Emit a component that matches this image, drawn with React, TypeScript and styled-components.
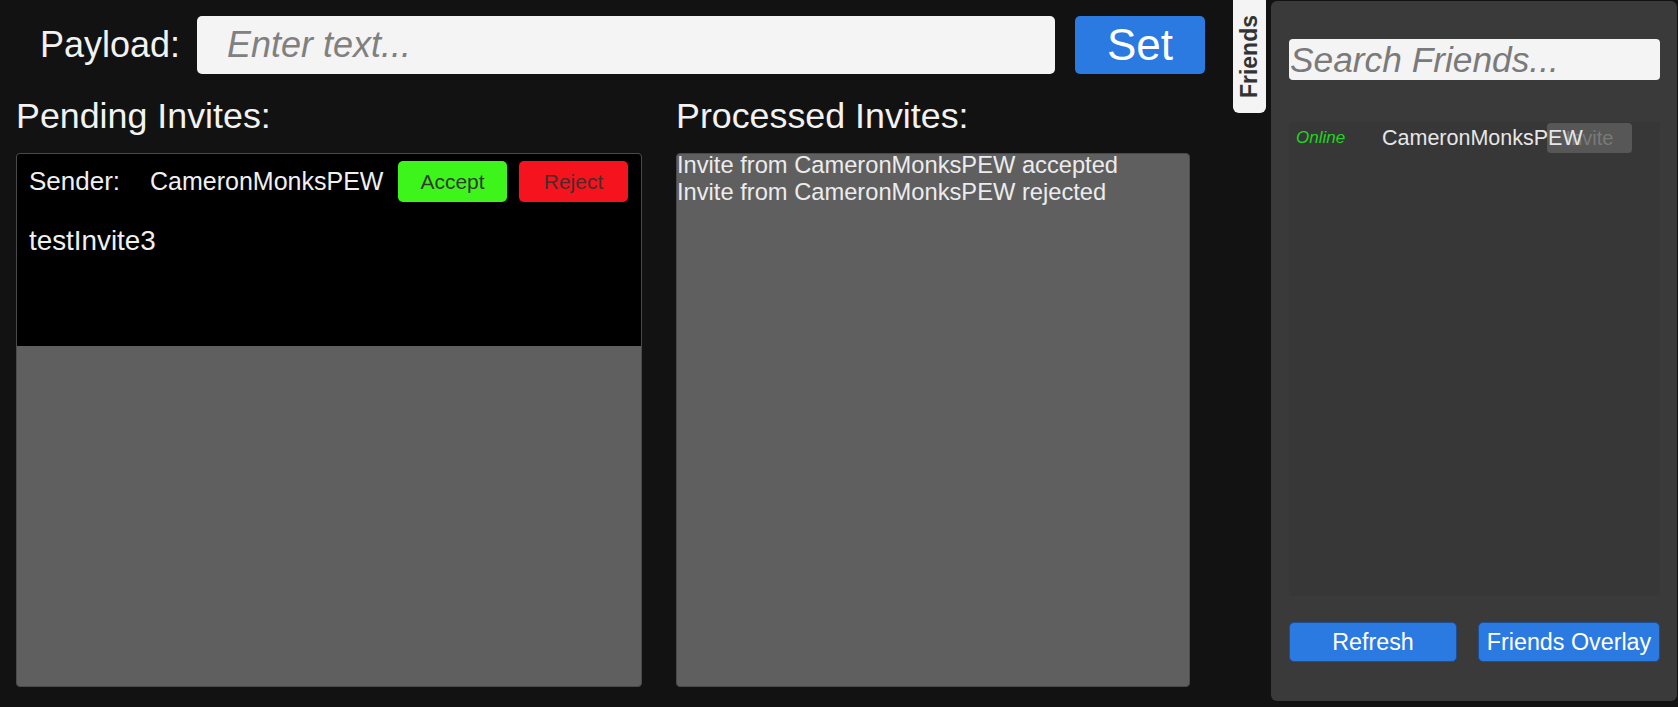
import React from "react";
import styled, { createGlobalStyle } from "styled-components";

const GlobalStyle = createGlobalStyle`
  html, body { margin: 0; padding: 0; background: #121212; }
  body { font-family: "Liberation Sans", Arial, sans-serif; }
  * { box-sizing: border-box; }
`;

const Screen = styled.div`
  width: 1678px;
  height: 707px;
  display: flex;
  align-items: flex-start;
  background: #121212;
  overflow: hidden;
`;

const Main = styled.main`
  width: 1233px;
  flex-shrink: 0;
  display: flex;
  flex-direction: column;
  padding: 15px 0 0 16px;
`;

const TopBar = styled.div`
  display: flex;
  align-items: center;
  height: 59px;
  padding-left: 24px;
`;

const FieldLabel = styled.label`
  width: 157px;
  flex-shrink: 0;
  font-size: 36px;
  color: #f2f2f2;
`;

const PayloadInput = styled.input`
  width: 858px;
  height: 58px;
  border: none;
  outline: none;
  border-radius: 5px;
  background: #f4f4f4;
  padding: 0 0 0 30px;
  font-family: "Liberation Sans", Arial, sans-serif;
  font-size: 36px;
  font-style: italic;
  color: #222;
  &::placeholder { color: #808080; }
`;

const SetButton = styled.button`
  width: 130px;
  height: 58px;
  margin-left: 20px;
  border: none;
  border-radius: 5px;
  background: #2a7ae2;
  color: #ffffff;
  font-family: "Liberation Sans", Arial, sans-serif;
  font-size: 44px;
  padding: 0;
`;

const Columns = styled.div`
  display: flex;
  gap: 34px;
  margin-top: 22px;
`;

const Section = styled.section<{ $width: number }>`
  width: ${(p) => p.$width}px;
  display: flex;
  flex-direction: column;
  gap: 17px;
`;

const Heading = styled.h2`
  margin: 0;
  height: 40px;
  font-size: 35.8px;
  line-height: 40px;
  font-weight: normal;
  color: #f2f2f2;
  white-space: nowrap;
`;

const Panel = styled.div`
  height: 534px;
  background: #5f5f5f;
  border: 1px solid #4a4a4a;
  border-radius: 4px;
  overflow: hidden;
`;

const InviteCard = styled.div`
  height: 192px;
  padding-top: 7px;
  background: #000000;
  color: #f0f0f0;
`;

const SenderRow = styled.div`
  display: flex;
  align-items: center;
  height: 41px;
  padding: 0 13px 0 12px;
`;

const SenderLabel = styled.span`
  width: 121px;
  flex-shrink: 0;
  font-size: 26px;
`;

const SenderName = styled.span`
  flex: 1;
  font-size: 25px;
  white-space: nowrap;
`;

const ActionButton = styled.button<{ $tone: "accept" | "reject" }>`
  width: 109px;
  height: 41px;
  flex-shrink: 0;
  margin-left: ${(p) => (p.$tone === "reject" ? "12px" : "0")};
  border: none;
  border-radius: 5px;
  background: ${(p) => (p.$tone === "accept" ? "#3ef51b" : "#f5141e")};
  color: ${(p) => (p.$tone === "accept" ? "#333a30" : "#4d2a2a")};
  font-family: "Liberation Sans", Arial, sans-serif;
  font-size: 21px;
  padding: 0;
`;

const InviteBody = styled.div`
  margin-top: 23px;
  padding-left: 12px;
  font-size: 27.8px;
  line-height: 31px;
`;

const LogLines = styled.div`
  margin-top: -2px;
  font-size: 23.7px;
  line-height: 27px;
  color: #ececec;
  white-space: nowrap;
`;

const Tab = styled.div`
  width: 33px;
  height: 113px;
  flex-shrink: 0;
  background: #f4f4f4;
  border-radius: 0 0 6px 6px;
  display: flex;
  align-items: center;
  justify-content: center;
`;

const TabText = styled.span`
  writing-mode: vertical-rl;
  transform: rotate(180deg);
  font-size: 23px;
  font-weight: bold;
  color: #333333;
`;

const FriendsPanel = styled.aside`
  width: 406px;
  height: 700px;
  margin: 1px 0 0 5px;
  flex-shrink: 0;
  background: #3a3a3a;
  border-radius: 6px;
  padding: 38px 17px 39px 18px;
  display: flex;
  flex-direction: column;
`;

const SearchInput = styled.input`
  height: 41px;
  flex-shrink: 0;
  border: none;
  outline: none;
  border-radius: 4px;
  background: #f4f4f4;
  padding: 0 0 0 1px;
  font-family: "Liberation Sans", Arial, sans-serif;
  font-size: 35.3px;
  font-style: italic;
  color: #222;
  &::placeholder { color: #7a7a7a; }
`;

const FriendList = styled.div`
  flex: 1;
  margin-top: 42px;
  background: #373737;
  border-radius: 3px;
`;

const FriendRow = styled.div`
  position: relative;
  display: flex;
  align-items: center;
  height: 32px;
  padding-left: 7px;
`;

const Status = styled.span`
  width: 86px;
  flex-shrink: 0;
  font-size: 17px;
  font-style: italic;
  color: #1fd41f;
`;

const FriendName = styled.span`
  position: relative;
  z-index: 1;
  font-size: 21.5px;
  color: #e6e6e6;
  white-space: nowrap;
`;

const InviteButton = styled.button`
  position: absolute;
  left: 258px;
  top: 1px;
  width: 85px;
  height: 30px;
  border: none;
  border-radius: 4px;
  background: #575757;
  color: #7a7a7a;
  font-family: "Liberation Sans", Arial, sans-serif;
  font-size: 20px;
  padding: 0;
`;

const ButtonRow = styled.div`
  display: flex;
  gap: 21px;
  margin-top: 26px;
  flex-shrink: 0;
`;

const PanelButton = styled.button<{ $width: number }>`
  width: ${(p) => p.$width}px;
  height: 40px;
  border: 1px solid #1d4f92;
  border-radius: 5px;
  background: #2a7ae2;
  color: #ffffff;
  font-family: "Liberation Sans", Arial, sans-serif;
  font-size: 23.3px;
  padding: 0;
  white-space: nowrap;
`;

export default function App() {
  return (
    <>
      <GlobalStyle />
      <Screen>
        <Main>
          <TopBar>
            <FieldLabel>Payload:</FieldLabel>
            <PayloadInput placeholder="Enter text..." />
            <SetButton>Set</SetButton>
          </TopBar>
          <Columns>
            <Section $width={626}>
              <Heading>Pending Invites:</Heading>
              <Panel>
                <InviteCard>
                  <SenderRow>
                    <SenderLabel>Sender:</SenderLabel>
                    <SenderName>CameronMonksPEW</SenderName>
                    <ActionButton $tone="accept">Accept</ActionButton>
                    <ActionButton $tone="reject">Reject</ActionButton>
                  </SenderRow>
                  <InviteBody>testInvite3</InviteBody>
                </InviteCard>
              </Panel>
            </Section>
            <Section $width={514}>
              <Heading>Processed Invites:</Heading>
              <Panel>
                <LogLines>
                  <div>Invite from CameronMonksPEW accepted</div>
                  <div>Invite from CameronMonksPEW rejected</div>
                </LogLines>
              </Panel>
            </Section>
          </Columns>
        </Main>
        <Tab>
          <TabText>Friends</TabText>
        </Tab>
        <FriendsPanel>
          <SearchInput placeholder="Search Friends..." />
          <FriendList>
            <FriendRow>
              <Status>Online</Status>
              <FriendName>CameronMonksPEW</FriendName>
              <InviteButton>Invite</InviteButton>
            </FriendRow>
          </FriendList>
          <ButtonRow>
            <PanelButton $width={168}>Refresh</PanelButton>
            <PanelButton $width={182}>Friends Overlay</PanelButton>
          </ButtonRow>
        </FriendsPanel>
      </Screen>
    </>
  );
}
